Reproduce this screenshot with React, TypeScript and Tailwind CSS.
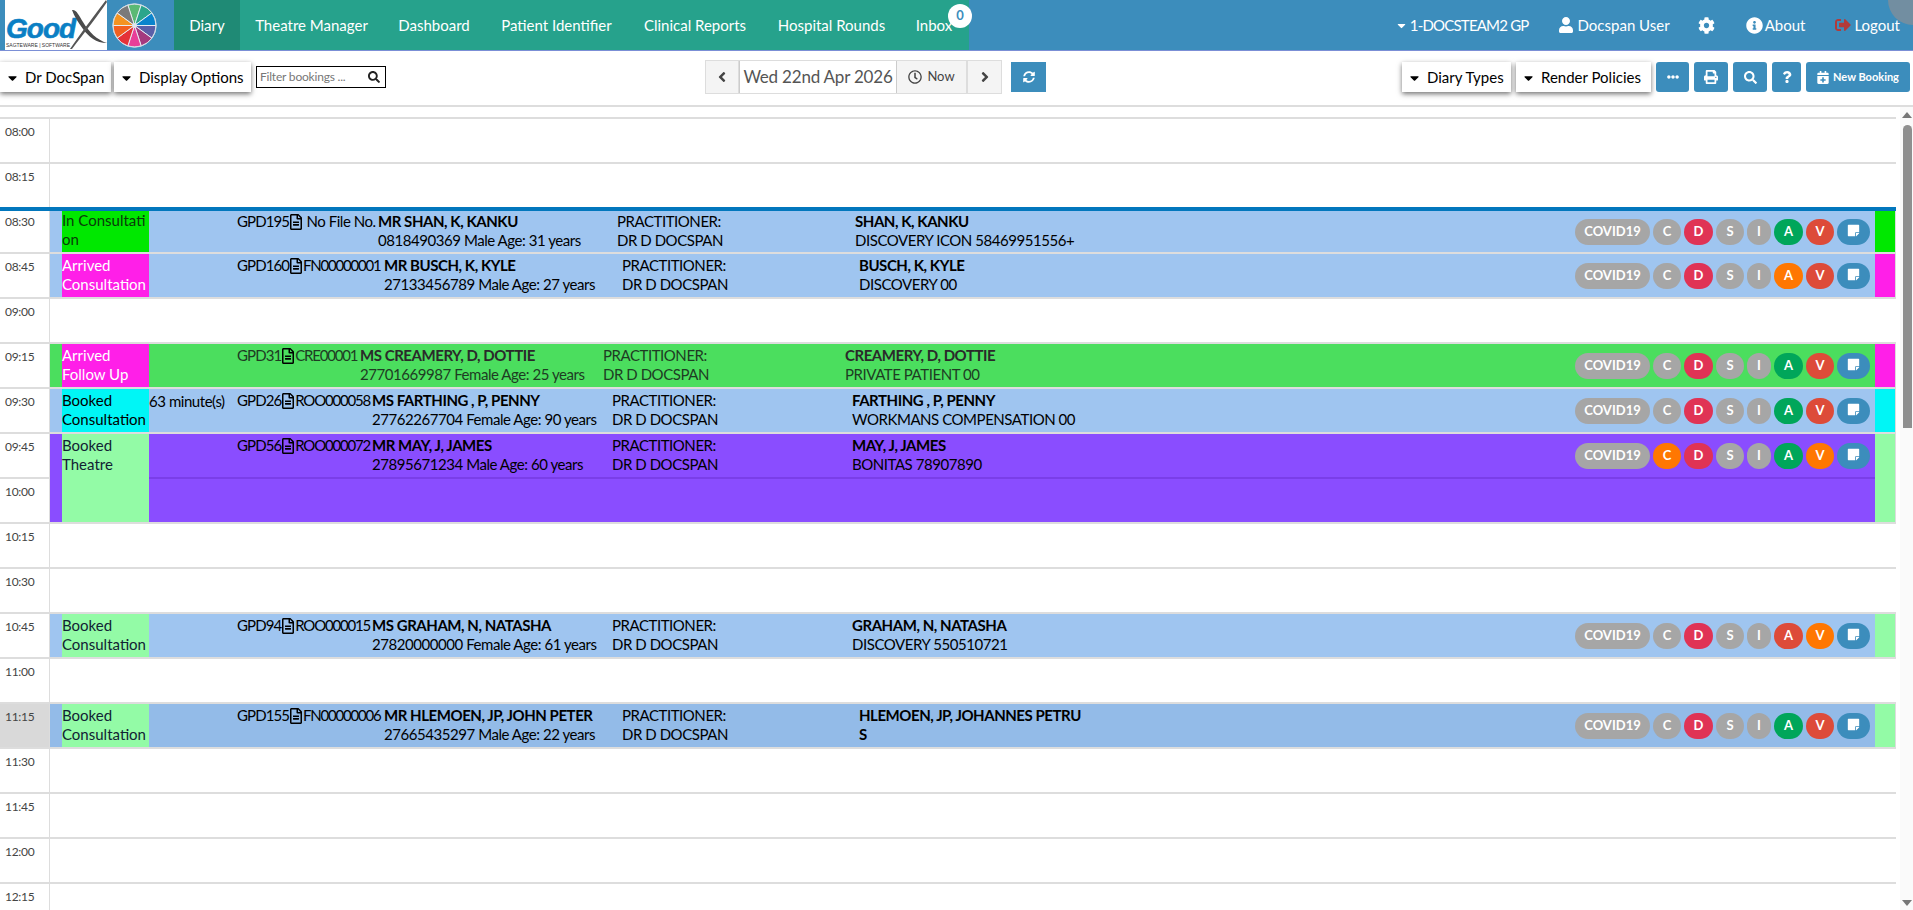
import { ReactNode } from "react";
import {
  FaAngleLeft,
  FaAngleRight,
  FaCalendarPlus,
  FaCaretDown,
  FaCog,
  FaEllipsisH,
  FaInfoCircle,
  FaPrint,
  FaQuestion,
  FaRegClock,
  FaRegFileAlt,
  FaSearch,
  FaSignOutAlt,
  FaStickyNote,
  FaSyncAlt,
  FaUser,
} from "react-icons/fa";

const NAV = [
  { label: "Diary", cls: "w-[66px] bg-[#1f8a75]" },
  { label: "Theatre Manager", cls: "w-[143px]" },
  { label: "Dashboard", cls: "w-[102px]" },
  { label: "Patient Identifier", cls: "w-[143px]" },
  { label: "Clinical Reports", cls: "w-[134px]" },
  { label: "Hospital Rounds", cls: "w-[139px]" },
  { label: "Inbox", cls: "w-[68px] pr-[2px]" },
];

const WHEEL = ["#5bb974", "#2ba58b", "#0a84cc", "#5a5fa8", "#a43a7f", "#e83e98", "#e53238", "#f2601f", "#f49320", "#7a7a7a"];

function wedge(i: number) {
  const a0 = ((i * 36 - 18 - 90) * Math.PI) / 180;
  const a1 = ((i * 36 + 18 - 90) * Math.PI) / 180;
  const r = 22;
  return `M0 0L${r * Math.cos(a0)} ${r * Math.sin(a0)}A${r} ${r} 0 0 1 ${r * Math.cos(a1)} ${r * Math.sin(a1)}Z`;
}

function Logo() {
  return (
    <div className="flex h-[50px] w-[174px] shrink-0 items-center bg-[#3c8dbc] pl-[5px]">
      <div className="relative h-[50px] w-[102px] overflow-hidden bg-white">
        <span className="absolute left-[1px] top-[14px] font-['Liberation_Sans',sans-serif] text-[28px] font-bold italic leading-[30px] tracking-[-1px] text-[#0a7fc4] [-webkit-text-stroke:0.6px_#0a7fc4]">
          Good
        </span>
        <span className="absolute left-[1px] top-[42px] whitespace-nowrap font-['Liberation_Sans',sans-serif] text-[5px] leading-[7px] text-[#333]">
          SAGTEWARE | SOFTWARE
        </span>
        <svg className="absolute inset-0" width="102" height="50" viewBox="0 0 102 50">
          <path d="M67 10C71 9 74 15 78 22C84 32 92 40 102 43C91 43 84 37 78 29C73 22 69 16 67 10Z" fill="#4a4a4a" />
          <path d="M101 0C92 12 78 30 65 49L67 49C80 32 94 14 102 2Z" fill="#555" />
        </svg>
      </div>
      <svg className="ml-[5px]" width="45" height="45" viewBox="-23 -23 46 46">
        {WHEEL.map((c, i) => (
          <path key={c} d={wedge(i)} fill={c} stroke="#e8eef4" strokeWidth="1" />
        ))}
        <circle r="22" fill="none" stroke="#cfd8e0" strokeWidth="1" />
        <circle r="2.5" fill="#dfe6ec" />
      </svg>
    </div>
  );
}

function Header() {
  return (
    <header className="relative flex h-[51px] shrink-0 overflow-hidden border-b border-[#7b8fd6] bg-[#3c8dbc] text-[15px] text-white">
      <Logo />
      <nav className="relative flex h-[50px] w-[795px] bg-[#26a28c]">
        {NAV.map((n) => (
          <a key={n.label} className={`flex items-center justify-center whitespace-nowrap ${n.cls}`}>
            {n.label}
          </a>
        ))}
        <span className="absolute left-[774px] top-[4px] flex h-[24px] w-[24px] items-center justify-center rounded-full bg-white text-[13px] font-bold text-[#3c8dbc]">
          0
        </span>
      </nav>
      <div className="ml-auto flex items-center pr-[13px]">
        <FaCaretDown className="mr-[3px] h-[13px] w-[11px]" />
        <span className="tracking-[-0.8px]">1-DOCSTEAM2 GP</span>
        <FaUser className="ml-[29px] mr-[4px] h-[16px] w-[16px]" />
        <span>Docspan User</span>
        <FaCog className="ml-[28px] h-[17px] w-[17px]" />
        <FaInfoCircle className="ml-[31px] mr-[2px] h-[17px] w-[17px]" />
        <span>About</span>
        <FaSignOutAlt className="ml-[30px] mr-[3px] h-[16px] w-[16px] text-[#b23a3a]" />
        <span>Logout</span>
      </div>
      <span className="absolute right-[-25px] top-[-25px] h-[50px] w-[50px] rounded-full bg-[#7f8f9a]/80" />
    </header>
  );
}

function DropButton({ label, cls }: { label: string; cls: string }) {
  return (
    <button
      type="button"
      className={`flex h-[30px] items-center whitespace-nowrap bg-white pl-[7px] pt-[1px] text-[15px] text-black shadow-[0_2px_5px_rgba(0,0,0,0.55)] ${cls}`}
    >
      <FaCaretDown className="mr-[7px] h-[14px] w-[11px]" />
      {label}
    </button>
  );
}

function BlueButton({ children, cls }: { children: ReactNode; cls: string }) {
  return (
    <button
      type="button"
      className={`flex h-[30px] items-center justify-center rounded-[3px] bg-[#3c8dbc] text-white ${cls}`}
    >
      {children}
    </button>
  );
}

function Toolbar() {
  return (
    <div className="flex h-[56px] shrink-0 items-center border-b-2 border-[#ddd] pb-[2px] pr-[3px]">
      <div className="flex w-[705px] shrink-0 items-center">
        <DropButton label="Dr DocSpan" cls="w-[111px]" />
        <DropButton label="Display Options" cls="ml-[3px] w-[137px]" />
        <div className="ml-[5px] flex h-[22px] w-[130px] items-center border border-black pl-[3px] pr-[5px] text-[12px] tracking-[-0.2px] text-[#777]">
          <span className="flex-1 whitespace-nowrap">Filter bookings ...</span>
          <FaSearch className="h-[12px] w-[12px] text-[#222]" />
        </div>
      </div>
      <div className="flex h-[34px] w-[297px] items-stretch border border-[#ddd] bg-[#f4f4f4] text-[#444]">
        <div className="flex w-[33px] items-center justify-center border-r border-[#ddd]">
          <FaAngleLeft className="h-[16px] w-[14px]" />
        </div>
        <div className="flex w-[158px] items-center justify-center whitespace-nowrap border-x border-[#ccc] bg-white text-[17px] tracking-[-0.2px] text-[#555]">
          Wed 22nd Apr 2026
        </div>
        <div className="flex w-[71px] items-center justify-center gap-[5px] border-r-2 border-[#ddd] text-[13px]">
          <FaRegClock className="h-[14px] w-[14px]" />
          Now
        </div>
        <div className="flex flex-1 items-center justify-center">
          <FaAngleRight className="h-[16px] w-[14px]" />
        </div>
      </div>
      <BlueButton cls="ml-[9px] w-[35px] rounded-none">
        <FaSyncAlt className="h-[12px] w-[12px]" />
      </BlueButton>
      <div className="ml-auto flex items-center">
        <DropButton label="Diary Types" cls="w-[109px]" />
        <DropButton label="Render Policies" cls="ml-[5px] w-[135px]" />
        <BlueButton cls="ml-[5px] w-[33px]">
          <FaEllipsisH className="h-[12px] w-[12px]" />
        </BlueButton>
        <BlueButton cls="ml-[5px] w-[34px]">
          <FaPrint className="h-[14px] w-[14px]" />
        </BlueButton>
        <BlueButton cls="ml-[5px] w-[34px]">
          <FaSearch className="h-[13px] w-[13px]" />
        </BlueButton>
        <BlueButton cls="ml-[5px] w-[29px]">
          <FaQuestion className="h-[12px] w-[12px]" />
        </BlueButton>
        <BlueButton cls="ml-[5px] w-[104px] gap-[4px] text-[11px] font-bold">
          <FaCalendarPlus className="h-[13px] w-[12px]" />
          New Booking
        </BlueButton>
      </div>
    </div>
  );
}

type Pill = { label: string; color: string; cls: string };

const GREY = "bg-[#a6a6a6]";
const RED = "bg-[#e03355]";
const GREEN = "bg-[#00a65a]";
const ORANGE = "bg-[#ff7701]";
const BRICK = "bg-[#dd4b39]";

function Pills({ c = GREY, a = GREEN, v = BRICK }: { c?: string; a?: string; v?: string }) {
  const pills: Pill[] = [
    { label: "COVID19", color: GREY, cls: "w-[75px]" },
    { label: "C", color: c, cls: "w-[28px]" },
    { label: "D", color: RED, cls: "w-[29px]" },
    { label: "S", color: GREY, cls: "w-[28px]" },
    { label: "I", color: GREY, cls: "w-[24px]" },
    { label: "A", color: a, cls: "w-[29px]" },
    { label: "V", color: v, cls: "w-[28px]" },
  ];
  return (
    <div className="ml-auto flex shrink-0 items-center gap-[3px] pr-[5px] text-[13px] font-bold tracking-normal text-white">
      {pills.map((p) => (
        <span key={p.label} className={`flex h-[26px] items-center justify-center rounded-full ${p.color} ${p.cls}`}>
          {p.label}
        </span>
      ))}
      <span className="flex h-[26px] w-[33px] items-center justify-center rounded-full bg-[#3c8dbc] pb-[2px]">
        <FaStickyNote className="h-[13px] w-[13px]" />
      </span>
    </div>
  );
}

type Booking = {
  strip: string;
  bg: string;
  status: string;
  statusBg: string;
  statusText: string;
  wait?: string;
  gpd: string;
  file: string;
  idW: string;
  nameW: string;
  pracW: string;
  name: string;
  phone: string;
  patient: string;
  medical: string;
  text?: string;
  nameText?: string;
  tall?: boolean;
  now?: boolean;
  active?: boolean;
  pills?: { c?: string; a?: string; v?: string };
};

const B_0830: Booking = {
  strip: "bg-[#9fc5f0]", bg: "bg-[#9fc5f0]", status: "In Consultati\non", statusBg: "bg-[#00e800]", statusText: "text-[#0a3a0a]",
  gpd: "GPD195", file: " No File No.", idW: "w-[141px]", nameW: "w-[239px]", pracW: "w-[238px]",
  name: "MR SHAN, K, KANKU", phone: "0818490369 Male Age: 31 years", patient: "SHAN, K, KANKU", medical: "DISCOVERY ICON 58469951556+", now: true,
};
const B_0845: Booking = {
  strip: "bg-[#9fc5f0]", bg: "bg-[#9fc5f0]", status: "Arrived\nConsultation", statusBg: "bg-[#ff1fe8]", statusText: "text-white",
  gpd: "GPD160", file: "FN00000001", idW: "w-[147px]", nameW: "w-[238px]", pracW: "w-[237px]",
  name: "MR BUSCH, K, KYLE", phone: "27133456789 Male Age: 27 years", patient: "BUSCH, K, KYLE", medical: "DISCOVERY 00", pills: { a: ORANGE },
};
const B_0915: Booking = {
  strip: "bg-[#4bde5e]", bg: "bg-[#4bde5e]", status: "Arrived\nFollow Up", statusBg: "bg-[#ff1fe8]", statusText: "text-white",
  gpd: "GPD31", file: "CRE00001", idW: "w-[123px]", nameW: "w-[243px]", pracW: "w-[242px]",
  name: "MS CREAMERY, D, DOTTIE", phone: "27701669987 Female Age: 25 years", patient: "CREAMERY, D, DOTTIE", medical: "PRIVATE PATIENT 00",
  text: "text-[#1e3c23]", nameText: "text-[#2a2a2a]",
};
const B_0930: Booking = {
  strip: "bg-[#9fc5f0]", bg: "bg-[#9fc5f0]", status: "Booked\nConsultation", statusBg: "bg-[#00f6f6]", statusText: "text-black", wait: "63 minute(s)",
  gpd: "GPD26", file: "ROO000058", idW: "w-[135px]", nameW: "w-[240px]", pracW: "w-[240px]",
  name: "MS FARTHING , P, PENNY", phone: "27762267704 Female Age: 90 years", patient: "FARTHING , P, PENNY", medical: "WORKMANS COMPENSATION 00",
};
const B_0945: Booking = {
  strip: "bg-[#8a4dff]", bg: "bg-[#8a4dff]", status: "Booked\nTheatre", statusBg: "bg-[#93fba6]", statusText: "text-[#123]",
  gpd: "GPD56", file: "ROO000072", idW: "w-[135px]", nameW: "w-[240px]", pracW: "w-[240px]",
  name: "MR MAY, J, JAMES", phone: "27895671234 Male Age: 60 years", patient: "MAY, J, JAMES", medical: "BONITAS 78907890", tall: true,
  pills: { c: ORANGE, v: ORANGE },
};
const B_1045: Booking = {
  strip: "bg-[#9fc5f0]", bg: "bg-[#9fc5f0]", status: "Booked\nConsultation", statusBg: "bg-[#93fba6]", statusText: "text-[#123]",
  gpd: "GPD94", file: "ROO000015", idW: "w-[135px]", nameW: "w-[240px]", pracW: "w-[240px]",
  name: "MS GRAHAM, N, NATASHA", phone: "27820000000 Female Age: 61 years", patient: "GRAHAM, N, NATASHA", medical: "DISCOVERY 550510721", pills: { a: BRICK, v: ORANGE },
};
const B_1115: Booking = {
  strip: "bg-[#93bbe8]", bg: "bg-[#93bbe8]", status: "Booked\nConsultation", statusBg: "bg-[#93fba6]", statusText: "text-[#123]",
  gpd: "GPD155", file: "FN00000006", idW: "w-[147px]", nameW: "w-[238px]", pracW: "w-[237px]",
  name: "MR HLEMOEN, JP, JOHN PETER", phone: "27665435297 Male Age: 22 years", patient: "HLEMOEN, JP, JOHANNES PETRU\nS", medical: "", active: true,
};

const SLOTS: { time: string; booking?: Booking; skip?: boolean }[] = [
  { time: "08:00" },
  { time: "08:15" },
  { time: "08:30", booking: B_0830 },
  { time: "08:45", booking: B_0845 },
  { time: "09:00" },
  { time: "09:15", booking: B_0915 },
  { time: "09:30", booking: B_0930 },
  { time: "09:45", booking: B_0945 },
  { time: "10:00", skip: true },
  { time: "10:15" },
  { time: "10:30" },
  { time: "10:45", booking: B_1045 },
  { time: "11:00" },
  { time: "11:15", booking: B_1115 },
  { time: "11:30" },
  { time: "11:45" },
  { time: "12:00" },
  { time: "12:15" },
];

function BookingText({ b }: { b: Booking }) {
  // file numbers run tighter than the "No File No." placeholder
  const fileCls = b.file.startsWith(" ") ? "" : "tracking-[-1.2px]";
  return (
    <div className={`flex min-h-0 flex-1 items-center ${b.text ?? "text-black"}`}>
      <div className="w-[88px] shrink-0 whitespace-nowrap pb-[19px]">{b.wait}</div>
      <div className={`flex h-[39px] shrink-0 items-start pb-[1px] ${b.idW}`}>
        <span className="tracking-[-0.9px]">{b.gpd}</span>
        <FaRegFileAlt className="mx-[1px] mt-[2px] h-[16px] w-[12px] shrink-0 text-black" />
        <span className={`whitespace-pre ${fileCls}`}>{b.file}</span>
      </div>
      <div className={`h-[39px] shrink-0 whitespace-nowrap pb-[1px] ${b.nameW}`}>
        <div className={`font-bold ${b.nameText ?? ""}`}>{b.name}</div>
        <div>{b.phone}</div>
      </div>
      <div className={`h-[39px] shrink-0 pb-[1px] ${b.pracW}`}>
        <div>PRACTITIONER:</div>
        <div>DR D DOCSPAN</div>
      </div>
      <div className="h-[39px] w-[240px] shrink-0 pb-[1px]">
        <div className={`whitespace-pre-line font-bold ${b.nameText ?? ""}`}>{b.patient}</div>
        {b.medical && <div className="whitespace-nowrap">{b.medical}</div>}
      </div>
      <Pills {...b.pills} />
    </div>
  );
}

function BookingRow({ b }: { b: Booking }) {
  return (
    <div className="flex min-w-0 flex-1">
      <div className={`w-[12px] shrink-0 ${b.strip}`} />
      <div className={`w-[87px] shrink-0 whitespace-pre-line tracking-normal ${b.now ? "pt-0" : "pt-[2px]"} ${b.statusBg} ${b.statusText}`}>
        {b.status}
      </div>
      <div className={`flex min-w-0 flex-1 flex-col ${b.bg}`}>
        {b.tall ? (
          <>
            <div className="flex h-[43px] shrink-0">
              <BookingText b={b} />
            </div>
            <div className="h-[2px] shrink-0 bg-[#7a3ee8]" />
          </>
        ) : (
          <BookingText b={b} />
        )}
      </div>
      <div className={`w-[21px] shrink-0 border-r border-[#ddd] ${b.statusBg}`} />
    </div>
  );
}

function TimeCell({ time, active, now, tall }: { time: string; active?: boolean; now?: boolean; tall?: boolean }) {
  return (
    <div
      className={`flex w-[50px] shrink-0 border-r border-[#ddd] pl-[5px] text-[12px] leading-[18px] tracking-[-0.3px] text-[#444] ${now ? "pt-[2px]" : "pt-[4px]"} ${tall ? "h-[43px]" : "h-full"} ${active ? "bg-[#d9d9d9]" : "bg-white"}`}
    >
      {time}
    </div>
  );
}

function Diary() {
  return (
    <div className="flex min-h-0 flex-1 overflow-hidden">
      <div className="w-[1896px] shrink-0 pt-[10px] text-[15px] leading-[19px] tracking-[-0.45px]">
        {SLOTS.filter((s) => !s.skip).map((s) => {
          const b = s.booking;
          if (b?.tall) {
            return (
              <div key={s.time} className="flex h-[90px] border-t-2 border-[#ddd]">
                <div className="flex w-[50px] shrink-0 flex-col">
                  <TimeCell time={s.time} tall />
                  <div className="h-[2px] bg-[#ddd]" />
                  <TimeCell time="10:00" tall />
                </div>
                <BookingRow b={b} />
              </div>
            );
          }
          return (
            <div key={s.time} className={`flex h-[45px] ${b?.now ? "border-t-4 border-[#0277bd]" : "border-t-2 border-[#ddd]"}`}>
              <TimeCell time={s.time} active={b?.active} now={b?.now} />
              {b ? <BookingRow b={b} /> : <div className="flex-1" />}
            </div>
          );
        })}
      </div>
      <div className="ml-[4px] flex w-[13px] shrink-0 flex-col items-center bg-[#fafafa] pl-[1px]">
        <span className="mt-[5px] h-0 w-0 border-x-[5px] border-b-[6px] border-x-transparent border-b-[#777]" />
        <span className="mt-[7px] h-[303px] w-[9px] rounded-t-[5px] bg-[#8f8f8f]" />
        <span className="mt-auto mb-[4px] h-0 w-0 border-x-[5px] border-t-[6px] border-x-transparent border-t-[#777]" />
      </div>
    </div>
  );
}

export default function App() {
  return (
    <div className="flex h-[910px] w-[1913px] flex-col overflow-hidden bg-white font-['Lato',sans-serif]">
      <Header />
      <Toolbar />
      <Diary />
    </div>
  );
}
